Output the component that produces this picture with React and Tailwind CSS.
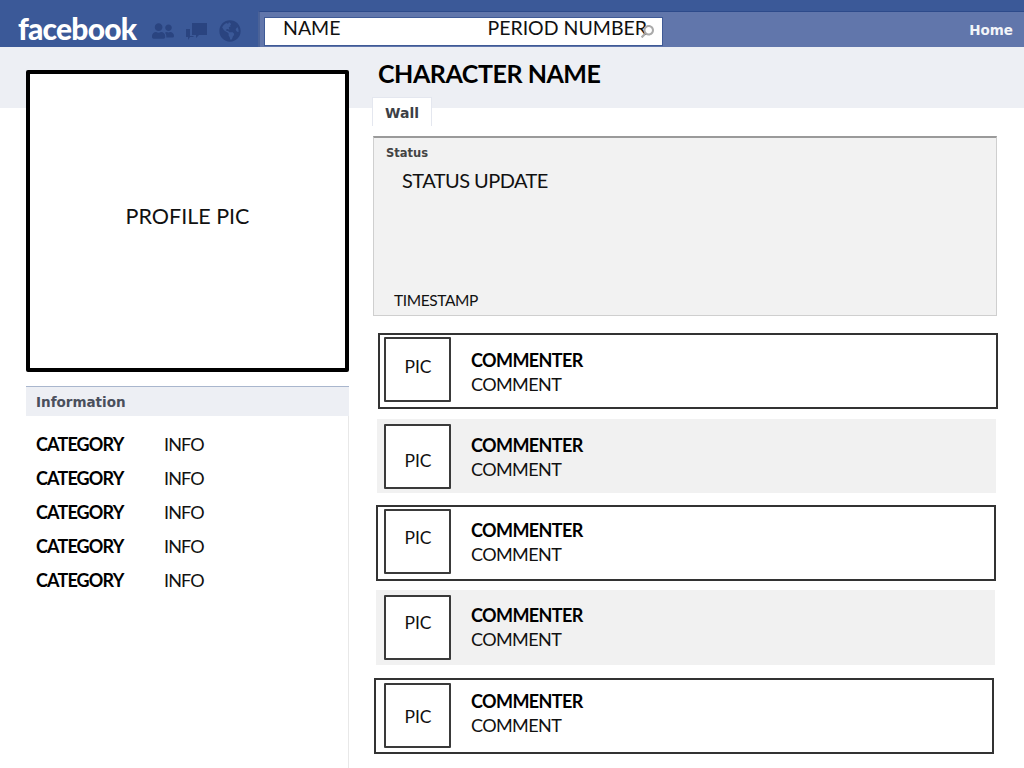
import { FaGlobeAmericas, FaSearch, FaUserFriends } from "react-icons/fa";

const body = "font-['Lato','Open_Sans',sans-serif]";
const ui = "font-['DejaVu_Sans',sans-serif]";

const infoRows = [1, 2, 3, 4, 5];

const comments = [
  { row: "mt-[17px] ml-[29px] w-[620px] h-[76px] border-2 border-[#333] bg-white pl-[4px] pt-[2px]", pic: "pb-[4px]", text: "pt-[11px]" },
  { row: "mt-[10px] ml-[28px] w-[619px] h-[74px] bg-[#f1f1f1] pl-[7px] pt-[5px]", pic: "pt-[10px]", text: "pt-[9px]" },
  { row: "mt-[12px] ml-[27px] w-[620px] h-[76px] border-2 border-[#333] bg-white pl-[6px] pt-[2px]", pic: "pb-[6px]", text: "pt-[9px]" },
  { row: "mt-[9px] ml-[27px] w-[619px] h-[75px] bg-[#f1f1f1] pl-[8px] pt-[5px]", pic: "pb-[8px]", text: "pt-[8px]" },
  { row: "mt-[13px] ml-[25px] w-[620px] h-[76px] border-2 border-[#333] bg-white pl-[8px] pt-[3px]", pic: "pt-[4px]", text: "pt-[6px]" },
];

function ChatIcon() {
  return (
    <svg width="21" height="17" viewBox="0 0 21 17" fill="currentColor">
      <path d="M6 0h15v12h-8l-3 3v-3H6z" />
      <path d="M0 6h4v7h4l-1 1H4l-2 3v-3H0z" />
    </svg>
  );
}

function Header() {
  return (
    <header className="flex h-[47px] bg-[#3b5998]">
      <div className="flex w-[258px] shrink-0 items-end pl-[18px]">
        <span className="font-['Lato',sans-serif] text-[30px] leading-[38px] font-black tracking-[-0.8px] text-white">
          facebook
        </span>
        <div className="mb-[5px] ml-[16px] flex items-center gap-[12px] text-[#2a4480]">
          <FaUserFriends size={22} />
          <ChatIcon />
          <FaGlobeAmericas size={22} />
        </div>
      </div>
      <div className="mt-[11px] flex h-[36px] flex-1 items-start border-t border-l-2 border-t-[#2d4a8a] border-l-[#4a6298] bg-[#6176ab] pt-[5px] pl-[4px]">
        <div className={`relative flex h-[29px] w-[399px] border border-[#3f5a96] bg-white text-[19.5px] leading-[20px] text-[#111] ${body}`}>
          <span className="ml-[18px]">NAME</span>
          <span className="ml-[147px]">PERIOD NUMBER</span>
          <FaSearch className="absolute top-[7px] right-[8px] scale-x-[-1] text-[#aaa]" size={13} />
        </div>
        <span className={`mt-[5px] ml-auto pr-[11px] text-[13.5px] leading-[16px] font-bold text-[#f2f4f8] ${ui}`}>Home</span>
      </div>
    </header>
  );
}

function LeftColumn() {
  return (
    <aside className="ml-[26px] flex w-[323px] shrink-0 flex-col">
      <div className={`mt-[23px] flex h-[302px] w-[323px] items-center justify-center rounded-[2px] border-4 border-black bg-white pb-[9px] text-[21.5px] text-[#111] ${body}`}>
        PROFILE PIC
      </div>
      <div className="mt-[14px] h-[30px] border-t border-[#a9b6cd] bg-[#edeff4] pt-[2px] pl-[10px]">
        <span className={`text-[13.5px] leading-[18px] font-bold text-[#4a4f5c] ${ui}`}>Information</span>
      </div>
      <div className={`flex flex-1 flex-col gap-[8px] border-r border-[#e8e8e8] pt-[15px] pl-[10px] text-[18px] leading-[26px] tracking-[-0.85px] text-[#111] ${body}`}>
        {infoRows.map((row) => (
          <div key={row} className="flex">
            <span className="w-[128px] font-bold text-black">CATEGORY</span>
            <span>INFO</span>
          </div>
        ))}
      </div>
    </aside>
  );
}

function Comment({ item }) {
  return (
    <div className={`box-border flex ${item.row} ${body}`}>
      <div className={`box-border flex h-[65px] w-[67px] shrink-0 items-center justify-center rounded-[1px] border-2 border-[#3a3a3a] bg-white pl-px text-[17.5px] text-[#111] ${item.pic}`}>
        PIC
      </div>
      <div className={`ml-[20px] text-[18px] leading-[24px] tracking-[-0.6px] text-[#111] ${item.text}`}>
        <div className="font-bold text-black">COMMENTER</div>
        <div>COMMENT</div>
      </div>
    </div>
  );
}

function RightColumn() {
  return (
    <section className={`flex-1 ${body}`}>
      <h1 className="mt-[8px] ml-[29px] text-[25px] leading-[36px] font-bold tracking-[-0.45px] text-black">CHARACTER NAME</h1>
      <div className={`mt-[6px] ml-[23px] box-border h-[29px] w-[60px] border-x border-t border-[#e4e7ef] bg-white pt-[6px] text-center text-[14px] leading-[18px] font-bold text-[#3c3f46] ${ui}`}>
        Wall
      </div>
      <div className="mt-[10px] ml-[24px] box-border flex h-[180px] w-[624px] flex-col border border-t-2 border-[#cfcfcf] border-t-[#9a9a9a] bg-[#f2f2f2]">
        <span className={`mt-[7px] ml-[12px] text-[11.5px] leading-[16px] font-bold text-[#444] ${ui}`}>Status</span>
        <span className="mt-[6px] ml-[28px] text-[20px] leading-[26px] tracking-[-0.55px] text-[#111]">STATUS UPDATE</span>
        <span className="mt-auto mb-[5px] ml-[20px] text-[15.5px] leading-[20px] tracking-[-0.4px] text-[#111]">TIMESTAMP</span>
      </div>
      {comments.map((item, index) => (
        <Comment key={index} item={item} />
      ))}
    </section>
  );
}

export default function App() {
  return (
    <div className="h-[768px] w-[1024px] overflow-hidden bg-white">
      <Header />
      <main className="flex h-[721px] bg-[linear-gradient(#edeff4_61px,#ffffff_61px)]">
        <LeftColumn />
        <RightColumn />
      </main>
    </div>
  );
}
